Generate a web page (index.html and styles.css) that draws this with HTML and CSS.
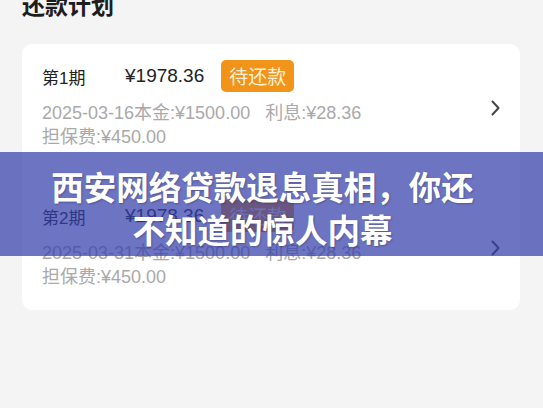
FILE: index.html
```html
<!DOCTYPE html>
<html lang="zh-CN">
<head>
    <meta charset="UTF-8">
    <meta name="viewport" content="width=device-width, initial-scale=1.0">
    <title>还款计划</title>
    <link rel="stylesheet" href="styles.css">
</head>
<body>
    <div class="page">
        <h1 class="page-title">还款计划</h1>

        <div class="plan-card">
            <div class="period">
                <div class="period-info">
                    <div class="period-head">
                        <span class="period-no">第1期</span>
                        <span class="period-amount">¥1978.36</span>
                        <span class="badge">待还款</span>
                    </div>
                    <p class="period-line">2025-03-16本金:¥1500.00<span class="gap">利息:¥28.36</span></p>
                    <p class="period-line">担保费:¥450.00</p>
                </div>
                <svg class="chevron" width="9" height="16" viewBox="0 0 9 16">
                    <path d="M1.5 1.5 L7.5 8 L1.5 14.5" fill="none" stroke="#444" stroke-width="2" stroke-linecap="round" stroke-linejoin="round"/>
                </svg>
            </div>

            <div class="period">
                <div class="period-info">
                    <div class="period-head">
                        <span class="period-no">第2期</span>
                        <span class="period-amount">¥1978.36</span>
                        <span class="badge">待还款</span>
                    </div>
                    <p class="period-line">2025-03-31本金:¥1500.00<span class="gap">利息:¥28.36</span></p>
                    <p class="period-line">担保费:¥450.00</p>
                </div>
                <svg class="chevron" width="9" height="16" viewBox="0 0 9 16">
                    <path d="M1.5 1.5 L7.5 8 L1.5 14.5" fill="none" stroke="#444" stroke-width="2" stroke-linecap="round" stroke-linejoin="round"/>
                </svg>
            </div>
        </div>
    </div>

    <div class="headline">
        <h2>西安网络贷款退息真相，你还<br>不知道的惊人内幕</h2>
    </div>
</body>
</html>
```

FILE: styles.css
```css
* {
    margin: 0;
    padding: 0;
    box-sizing: border-box;
}
body {
    background: #f4f4f4;
    font-family: "Liberation Sans", "Noto Sans CJK SC", sans-serif;
    color: #222;
    width: 543px;
    height: 408px;
    overflow: hidden;
    position: relative;
}
.page {
    padding: 0 23px 0 22px;
}
.page-title {
    font-family: "Noto Sans CJK SC", sans-serif;
    font-size: 23px;
    font-weight: 600;
    line-height: 28px;
    margin-top: -10px;
    color: #1d1d1d;
}
.plan-card {
    margin-top: 26px;
    background: #fff;
    border-radius: 10px;
}
.period {
    display: flex;
    align-items: center;
    padding: 16px 20px 21px 20px;
}
.period:first-child {
    padding-bottom: 35px;
}
.period-info {
    flex: 1;
}
.period-head {
    display: flex;
    align-items: center;
    height: 32px;
}
.period-no {
    width: 83px;
    font-size: 17px;
    color: #222;
}
.period-amount {
    font-size: 19px;
    color: #222;
}
.badge {
    margin-left: 17px;
    height: 32px;
    padding: 0 8px;
    line-height: 32px;
    border-radius: 5px;
    background: #f19419;
    color: #fff1d6;
    font-family: "Noto Sans CJK SC", sans-serif;
    font-size: 19px;
}
.period-line {
    font-size: 18px;
    line-height: 24px;
    color: #a9a9a9;
}
.period-head + .period-line {
    margin-top: 9px;
}
.gap {
    margin-left: 15px;
}
.chevron {
    margin-top: 6px;
    flex-shrink: 0;
}
.headline {
    position: absolute;
    left: 0;
    top: 152px;
    width: 100%;
    height: 104px;
    padding: 6px 18px 0 0;
    background: rgba(52, 62, 170, 0.72);
    display: flex;
    align-items: center;
    justify-content: center;
}
.headline h2 {
    font-family: "Noto Sans CJK SC", sans-serif;
    font-size: 32.5px;
    font-weight: 700;
    line-height: 43px;
    color: #fff;
    text-align: center;
    text-shadow: 1px 1px 2px rgba(0, 0, 0, 0.25);
}
```
